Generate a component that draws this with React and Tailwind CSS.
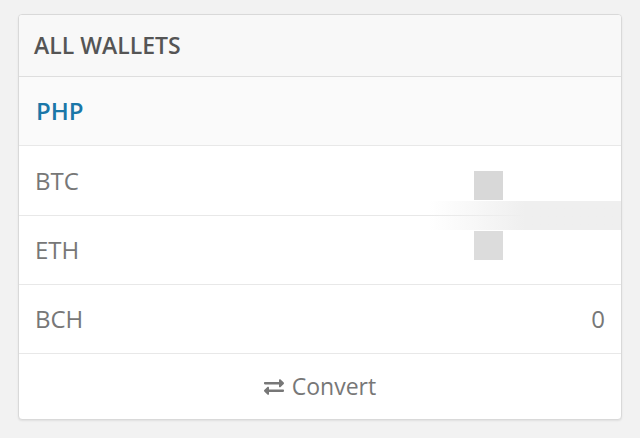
import { FaExchangeAlt } from 'react-icons/fa';

const wallets = [
  { code: 'BTC', amount: '', h: 'h-[70px]' },
  { code: 'ETH', amount: '', h: 'h-[69px]' },
  { code: 'BCH', amount: '0', h: 'h-[69px]' },
];

export default function App() {
  return (
    <div className="min-h-[438px] bg-[#f2f2f2] px-[18px] pt-[14px] font-['Open_Sans',sans-serif]">
      <div className="relative w-[604px] overflow-hidden rounded-[4px] border border-[#d9d9d9] bg-white shadow-[0_1px_2px_rgba(0,0,0,0.08)]">
        <div className="flex h-[62px] items-center border-b border-[#dedede] bg-[#f8f8f8] px-[15px] text-[23px] font-semibold text-[#555]">
          ALL WALLETS
        </div>
        <div className="flex h-[69px] items-center border-b border-[#e8e8e8] bg-[#fafafa] px-[17px] text-[24px] font-semibold text-[#1a77a8]">
          PHP
        </div>
        {wallets.map((w) => (
          <div
            key={w.code}
            className={`flex ${w.h} items-center justify-between border-b border-[#e8e8e8] px-[16px] text-[24px] text-[#777]`}
          >
            <span>{w.code}</span>
            <span>{w.amount}</span>
          </div>
        ))}
        <div className="flex h-[65px] items-center justify-center gap-2 text-[23px] text-[#777]">
          <FaExchangeAlt className="text-[20px]" />
          <span>Convert</span>
        </div>

        {/* redacted balances */}
        <div className="absolute left-[455px] top-[156px] h-[29px] w-[29px] bg-[#d8d8d8]" />
        <div className="absolute left-[410px] right-0 top-[186px] h-[29px] bg-gradient-to-r from-transparent via-[#efefef] to-[#efefef]" />
        <div className="absolute left-[455px] top-[216px] h-[29px] w-[29px] bg-[#dcdcdc]" />
      </div>
    </div>
  );
}
